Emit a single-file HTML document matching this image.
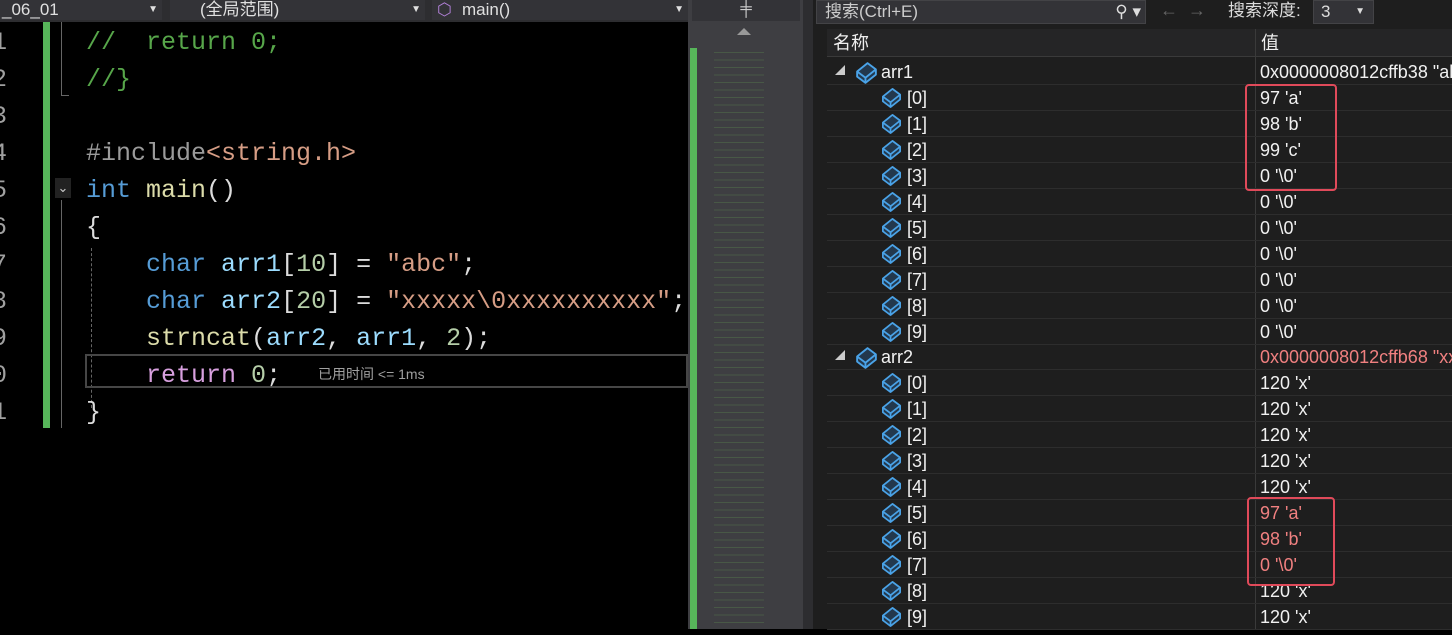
<!DOCTYPE html>
<html><head><meta charset="utf-8"><style>
*{margin:0;padding:0;box-sizing:border-box}
body{width:1452px;height:629px;overflow:hidden;background:#000;position:relative;font-family:"Liberation Sans","Noto Sans CJK SC",sans-serif}
.abs{position:absolute}
.top{top:0;height:22px;background:#2d2d30}
.dd{position:absolute;top:0;height:20px;background:#333337;color:#e0e0e0;font-size:17px;line-height:20px}
.code{position:absolute;left:0;top:0;width:688px;height:629px;background:#000}
.ln{position:absolute;left:-8px;font-family:"Liberation Mono",monospace;font-size:25px;color:#a0a0a0;line-height:37px}
.cl{position:absolute;font-family:"Liberation Mono",monospace;font-size:25px;line-height:37px;white-space:pre;color:#dcdcdc}
.g{color:#57a64a}.b{color:#569cd6}.y{color:#dcdcaa}.v{color:#9cdcfe}.o{color:#d69d85}.n{color:#b5cea8}.p{color:#d8a0df}.gr{color:#9b9b9b}
.rp{position:absolute;left:813px;top:0;width:639px;height:629px;background:#1e1e1e}
.row{position:absolute;left:827px;width:625px;height:26px;border-bottom:1px solid #2d2d2d;color:#f1f1f1;font-size:18px;line-height:26px}
.row .nm{position:absolute;white-space:nowrap}
.row .val{position:absolute;left:433px;white-space:nowrap}
.red{color:#f08080!important}
.ic{position:absolute;top:1px}
</style></head><body>
<div class="code">
  <div class="abs top" style="left:0;width:688px"></div>
  <div class="dd" style="left:0;width:162px;padding-left:2px">_06_01<span style="position:absolute;right:4px;font-size:10px">▼</span></div>
  <div class="dd" style="left:170px;width:255px;padding-left:30px">(全局范围)<span style="position:absolute;right:4px;font-size:10px">▼</span></div>
  <div class="dd" style="left:432px;width:256px;padding-left:30px"><span style="position:absolute;left:5px;color:#b180d7">⬡</span>main()<span style="position:absolute;right:4px;font-size:10px">▼</span></div>
  <div class="abs" style="left:43px;top:22px;width:7px;height:406px;background:#57b65a"></div>
  <div class="abs" style="left:61px;top:22px;width:1px;height:74px;background:#666"></div>
  <div class="abs" style="left:61px;top:95px;width:8px;height:1px;background:#666"></div>
  <div class="abs" style="left:61px;top:200px;width:1px;height:228px;background:#666"></div>
  <div class="abs" style="left:55px;top:178px;width:16px;height:20px;background:#222;color:#ccc;font-size:13px;text-align:center;line-height:20px">⌄</div>
  <div class="abs" style="left:91px;top:248px;border-left:1px dashed #666;height:160px"></div>
  <div class="abs" style="left:85px;top:354px;width:603px;height:34px;border:2px solid #464646"></div>
  <div class="ln" style="top:24px">1<br>2<br>3<br>4<br>5<br>6<br>7<br>8<br>9<br>0<br>1</div>
  <div class="cl" style="left:86px;top:24px"><span class="g">//  return 0;</span>
<span class="g">//}</span>

<span class="gr">#include</span><span class="o">&lt;string.h&gt;</span>
<span class="b">int</span> <span class="y">main</span>()
{
    <span class="b">char</span> <span class="v">arr1</span>[<span class="n">10</span>] = <span class="o">"abc"</span>;
    <span class="b">char</span> <span class="v">arr2</span>[<span class="n">20</span>] = <span class="o">"xxxxx\0xxxxxxxxxx"</span>;
    <span class="y">strncat</span>(<span class="v">arr2</span>, <span class="v">arr1</span>, <span class="n">2</span>);
    <span class="p">return</span> <span class="n">0</span>;
}</div>
  <div class="abs" style="left:318px;top:364px;color:#a0a0a0;font-size:14px">已用时间 &lt;= 1ms</div>
</div>
<div class="abs" style="left:688px;top:0;width:115px;height:629px;background:#3e3e42"></div>
<div class="abs" style="left:690px;top:48px;width:7px;height:581px;background:#57b65a"></div>
<div class="abs" style="left:692px;top:0;width:108px;height:21px;background:#333337;color:#ccc;text-align:center;font-size:16px">╪</div>
<div class="abs" style="left:737px;top:28px;width:0;height:0;border-left:7px solid transparent;border-right:7px solid transparent;border-bottom:7px solid #999"></div>
<div class="abs" style="left:714px;top:46px;width:50px;height:580px;background:repeating-linear-gradient(#3e3e42 0 6px,#4e6a48 6px 7px,#3e3e42 7px 7.5px);opacity:.6"></div>
<div class="abs" style="left:803px;top:0;width:10px;height:629px;background:#2d2d30"></div>
<div class="rp"></div>
<div class="abs" style="left:816px;top:0;width:330px;height:24px;background:#333337;border:1px solid #434346;color:#ccc;font-size:17px;line-height:22px;padding-left:8px">搜索(Ctrl+E)<span style="position:absolute;right:4px;color:#ddd">⚲ ▾</span></div>
<div class="abs" style="left:1160px;top:0;color:#666;font-size:18px">←&nbsp;&nbsp;→</div>
<div class="abs" style="left:1228px;top:0;color:#ddd;font-size:17px;line-height:22px">搜索深度:</div>
<div class="abs" style="left:1313px;top:0;width:61px;height:24px;background:#333337;border:1px solid #434346;color:#ddd;font-size:17px;padding-left:7px;line-height:22px">3<span style="position:absolute;right:8px;font-size:10px">▼</span></div>
<div class="abs" style="left:827px;top:29px;width:625px;height:28px;background:#252526;color:#eee;font-size:18px;line-height:28px;border-bottom:1px solid #3a3a3a"><span style="position:absolute;left:6px">名称</span><span style="position:absolute;left:434px">值</span></div>
<div class="abs" style="left:1255px;top:29px;width:1px;height:600px;background:#3a3a3a"></div>
<div id="rows"></div>
<script>
var rows=[['arr1','0x0000008012cffb38 "ab',0,0]];
var a1=["97 'a'","98 'b'","99 'c'"];
for(var i=0;i<10;i++)rows.push(['['+i+']',i<3?a1[i]:"0 '\\0'",1,0]);
rows.push(['arr2','0x0000008012cffb68 "xx',0,1]);
for(var i=0;i<10;i++){var v="120 'x'",r=0;if(i==5){v="97 'a'";r=1}if(i==6){v="98 'b'";r=1}if(i==7){v="0 '\\0'";r=1}rows.push(['['+i+']',v,1,r]);}
function ic(s){return '<svg viewBox="0 0 24 24" width="'+s+'" height="'+s+'"><path d="M3 11 L13 3 L21 9 L21 14 L11 22 L3 16 Z" fill="#23384d" stroke="#4aa3e8" stroke-width="1.8" stroke-linejoin="round"/><path d="M3 11 L11 17 L21 9 M11 17 L11 22" fill="none" stroke="#4aa3e8" stroke-width="1.8" stroke-linejoin="round"/></svg>';}
var h='';
rows.forEach(function(r,k){var t=59+k*25.95;var ind=r[2]?53:27;var s=r[2]?23:25;
h+='<div class="row" style="top:'+t+'px">'+(r[2]?'':'<span class="nm" style="left:8px;font-size:10px;color:#ccc">◢</span>')+'<span class="ic" style="left:'+ind+'px">'+ic(s)+'</span><span class="nm" style="left:'+(ind+27)+'px">'+r[0]+'</span><span class="val'+(r[3]?' red':'')+'">'+r[1]+'</span></div>';});
document.getElementById('rows').innerHTML=h;
</script>
<div class="abs" style="left:1245px;top:84px;width:92px;height:107px;border:2px solid #e04a5a;border-radius:4px"></div>
<div class="abs" style="left:1247px;top:497px;width:88px;height:89px;border:2px solid #e04a5a;border-radius:4px"></div>
</body></html>
